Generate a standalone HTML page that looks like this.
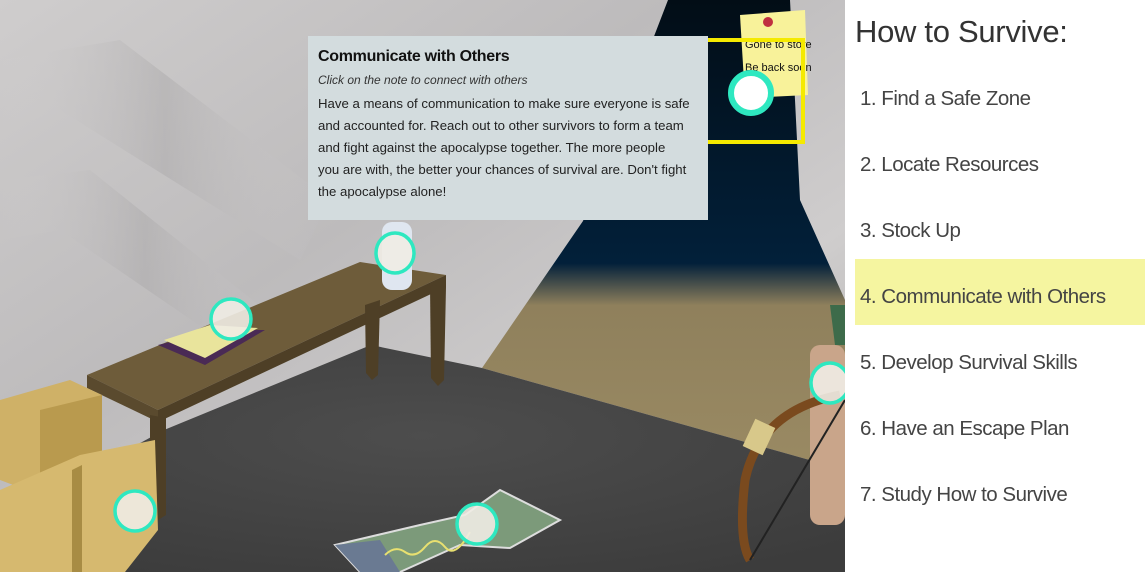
<!DOCTYPE html>
<html><head><meta charset="utf-8"><style>
body{margin:0;width:1148px;height:572px;overflow:hidden;background:#fff;font-family:"Liberation Sans",sans-serif;position:relative}
#scene{position:absolute;left:0;top:0}
.tip{position:absolute;left:308px;top:36px;width:400px;height:184px;background:#d3dcde;color:#1c1c1c}
.tip .t{position:absolute;left:10px;top:12px;font-size:16px;font-weight:bold;letter-spacing:-0.3px;color:#111}
.tip .i{position:absolute;left:10px;top:37px;font-size:12px;font-style:italic;color:#333}
.tip .b{position:absolute;left:10px;top:57px;font-size:13.2px;line-height:22px;white-space:nowrap;color:#222}
.panel{position:absolute;left:845px;top:0;width:303px;height:572px;background:#fff}
.h{position:absolute;left:10px;top:14px;font-size:31px;color:#333;letter-spacing:-0.3px}
.it{position:absolute;left:15px;font-size:20.5px;color:#444;letter-spacing:-0.5px}
.hl{position:absolute;left:10px;top:259px;width:290px;height:66px;background:#f5f5a0}
</style></head><body>
<svg id="scene" width="845" height="572" viewBox="0 0 845 572">
<defs>
<linearGradient id="wall" x1="0" y1="0" x2="1" y2="1">
<stop offset="0" stop-color="#cfcdcd"/><stop offset="0.4" stop-color="#bdbbbc"/><stop offset="0.7" stop-color="#cfcdcd"/><stop offset="1" stop-color="#a9a7a8"/></linearGradient>
<linearGradient id="sky" gradientUnits="userSpaceOnUse" x1="0" y1="0" x2="0" y2="470">
<stop offset="0" stop-color="#020d16"/><stop offset="0.56" stop-color="#02203a"/><stop offset="0.65" stop-color="#8f805c"/><stop offset="1" stop-color="#9a8a63"/></linearGradient>
<radialGradient id="floor" cx="0.5" cy="0.4" r="0.7"><stop offset="0" stop-color="#4d4d4d"/><stop offset="1" stop-color="#3c3c3c"/></radialGradient>
<linearGradient id="fold" x1="0" y1="0" x2="1" y2="0"><stop offset="0" stop-color="#d8d6d6" stop-opacity="0"/><stop offset="0.5" stop-color="#a9a7a8" stop-opacity="0.45"/><stop offset="1" stop-color="#d8d6d6" stop-opacity="0"/></linearGradient>
</defs>
<rect width="845" height="572" fill="url(#wall)"/>
<polygon points="0,60 120,40 330,200 300,260 60,110 0,130" fill="url(#fold)"/>
<polygon points="0,180 90,170 290,330 250,360 60,230 0,240" fill="url(#fold)"/>
<polygon points="668,0 790,0 800,200 845,300 845,470 482,368 583,221" fill="url(#sky)"/>
<polygon points="371,345 482,368 845,470 845,572 0,572 0,520 164,430" fill="url(#floor)"/>
<!-- table -->
<polygon points="87,375 360,262 446,275 158,410" fill="#6e5c3a"/>
<polygon points="87,375 158,410 158,422 87,388" fill="#5a4a2e"/>
<polygon points="158,410 446,275 446,287 158,422" fill="#4e3f26"/>
<polygon points="150,415 166,418 166,515 158,520 150,512" fill="#4e3f26"/>
<polygon points="365,305 380,300 378,375 372,380 366,373" fill="#4e3f26"/>
<polygon points="430,285 446,287 444,380 438,386 431,378" fill="#4e3f26"/>
<!-- book -->
<polygon points="158,345 218,330 265,330 205,365" fill="#4a2a55"/>
<polygon points="164,340 210,325 258,328 205,358" fill="#e9e49c"/>
<!-- bottle -->
<rect x="382" y="222" width="30" height="68" rx="10" fill="#dfe6f0"/>
<!-- boxes -->
<polygon points="0,400 70,380 102,395 102,480 40,495 0,480" fill="#cfb167"/>
<polygon points="40,495 102,480 102,395 40,410" fill="#b99a4e"/>
<polygon points="0,490 80,455 155,440 158,530 125,572 0,572" fill="#d6b96f"/>
<polygon points="72,470 82,465 82,572 72,572" fill="#a88c44"/>
<!-- map -->
<polygon points="335,545 420,525 465,515 500,490 560,520 510,548 460,545 400,572 360,572" fill="#7c9a7a" stroke="#ddd" stroke-width="2"/>
<polygon points="335,545 380,540 400,572 360,572" fill="#6a7a92"/>
<path d="M385,555 q10,-10 20,-3 t20,-5 t20,0 t25,-15" stroke="#e8e070" stroke-width="2" fill="none"/>
<!-- bow & quiver -->
<rect x="810" y="345" width="35" height="180" rx="10" fill="#c9a58a"/>
<path d="M830 305 l5 40 l10 0 l0 -40" fill="#3d6b4a"/>
<path d="M840 395 Q760 410 745 480 Q738 540 750 560" stroke="#7a4a1e" stroke-width="9" fill="none"/>
<rect x="748" y="422" width="22" height="30" fill="#d8c88a" transform="rotate(25 759 437)"/>
<line x1="750" y1="560" x2="845" y2="400" stroke="#222" stroke-width="2"/>
<!-- note -->
<polygon points="740,15 805,10 808,95 745,98" fill="#f8f29a"/>
<circle cx="768" cy="22" r="5" fill="#c03040"/>
<text x="745" y="48" font-family="Liberation Sans,sans-serif" font-size="11" fill="#111">Gone to store</text>
<text x="745" y="71" font-family="Liberation Sans,sans-serif" font-size="11" fill="#111">Be back soon</text>
<rect x="705" y="40" width="98" height="102" fill="none" stroke="#f5ea00" stroke-width="4"/>
<!-- hotspots -->
<circle cx="751" cy="93" r="20" fill="#fff" stroke="#2ee8c0" stroke-width="6"/>
<g fill="#f0ece4" fill-opacity="0.9" stroke="#2ee8c0" stroke-width="3.5">
<ellipse cx="395" cy="253" rx="19" ry="20"/>
<ellipse cx="231" cy="319" rx="20" ry="20"/>
<ellipse cx="135" cy="511" rx="20" ry="20"/>
<ellipse cx="477" cy="524" rx="20" ry="20"/>
<ellipse cx="830" cy="383" rx="19" ry="20"/>
</g>
</svg>
<div class="tip">
<div class="t">Communicate with Others</div>
<div class="i">Click on the note to connect with others</div>
<div class="b">Have a means of communication to make sure everyone is safe<br>and accounted for. Reach out to other survivors to form a team<br>and fight against the apocalypse together. The more people<br>you are with, the better your chances of survival are. Don't fight<br>the apocalypse alone!</div>
</div>
<div class="panel">
<div class="h">How to Survive:</div>
<div class="hl"></div>
<div class="it" style="top:87px">1. Find a Safe Zone</div>
<div class="it" style="top:153px">2. Locate Resources</div>
<div class="it" style="top:219px">3. Stock Up</div>
<div class="it" style="top:285px">4. Communicate with Others</div>
<div class="it" style="top:351px">5. Develop Survival Skills</div>
<div class="it" style="top:417px">6. Have an Escape Plan</div>
<div class="it" style="top:483px">7. Study How to Survive</div>
</div>
</body></html>
